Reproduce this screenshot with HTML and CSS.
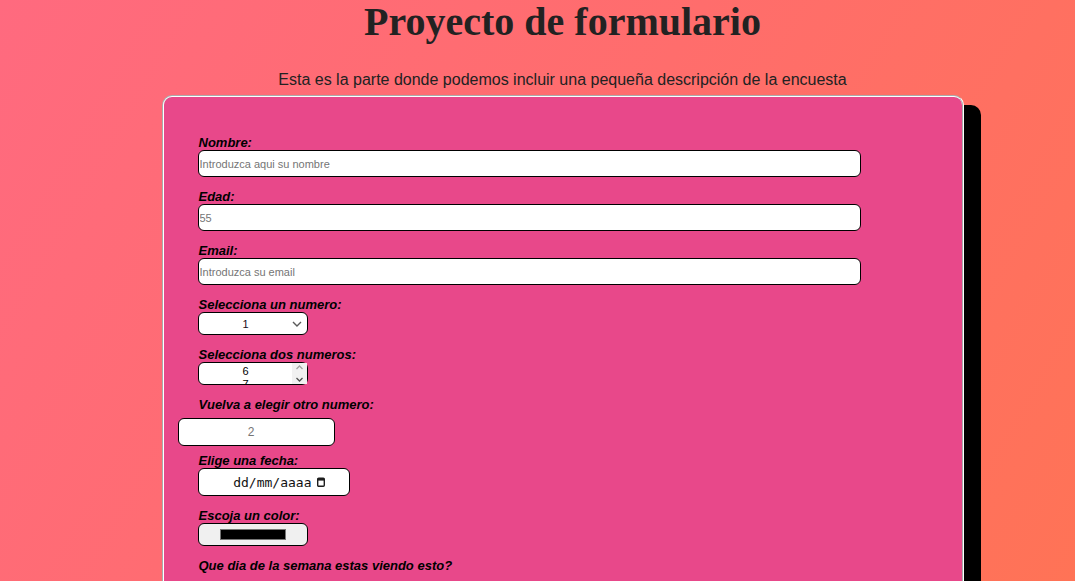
FILE: index.html
```html
<!DOCTYPE html>
<html lang="es">
<head>
<meta charset="utf-8">
<title>Proyecto de formulario</title>
<link rel="stylesheet" href="styles.css">
</head>
<body>
<div class="page">
  <h1 class="title">Proyecto de formulario</h1>
  <p class="desc">Esta es la parte donde podemos incluir una pequeña descripción de la encuesta</p>
  <form class="card">
    <div class="field">
      <label class="lbl" for="nombre">Nombre:</label>
      <input class="txt" id="nombre" type="text" placeholder="Introduzca aqui su nombre">
    </div>
    <div class="field">
      <label class="lbl" for="edad">Edad:</label>
      <input class="txt" id="edad" type="text" placeholder="55">
    </div>
    <div class="field">
      <label class="lbl" for="email">Email:</label>
      <input class="txt" id="email" type="email" placeholder="Introduzca su email">
    </div>
    <div class="field">
      <label class="lbl" for="num1">Selecciona un numero:</label>
      <span class="sel-wrap">
        <select class="sel" id="num1">
          <option>1</option><option>2</option><option>3</option><option>4</option><option>5</option>
        </select>
        <svg class="chev" width="10" height="6" viewBox="0 0 10 6"><polyline points="1,1 5,5 9,1" fill="none" stroke="#5a5a5a" stroke-width="1.4"/></svg>
      </span>
    </div>
    <div class="field">
      <label class="lbl" for="num2">Selecciona dos numeros:</label>
      <span class="multi-wrap">
        <select class="multi" id="num2" multiple>
          <option>6</option><option>7</option><option>8</option><option>9</option><option>10</option>
        </select>
        <svg class="sbar" width="15" height="21" viewBox="0 0 15 21"><rect width="15" height="21" fill="#f1f1f1"/><polyline points="4.5,6 7.5,3 10.5,6" fill="none" stroke="#a3a3a3" stroke-width="1.3"/><polyline points="4.5,15 7.5,18 10.5,15" fill="none" stroke="#505050" stroke-width="1.3"/></svg>
      </span>
    </div>
    <div class="field field-tight">
      <label class="lbl" for="num3">Vuelva a elegir otro numero:</label>
      <input class="num" id="num3" type="number" placeholder="2">
    </div>
    <div class="field">
      <label class="lbl" for="fecha">Elige una fecha:</label>
      <div class="date" id="fecha"><span class="date-val">dd/mm/aaaa</span><svg class="cal" width="8" height="10" viewBox="0 0 8 10"><rect x="0.7" y="1.2" width="6.6" height="8.1" rx="1" fill="none" stroke="#1e1e1e" stroke-width="1.4"/><rect x="0.7" y="1.2" width="6.6" height="2.4" fill="#1e1e1e"/></svg></div>
    </div>
    <div class="field">
      <label class="lbl" for="color">Escoja un color:</label>
      <input class="color" id="color" type="color" value="#000000">
    </div>
    <div class="field">
      <span class="lbl">Que dia de la semana estas viendo esto?</span>
    </div>
  </form>
</div>
</body>
</html>
```
FILE: styles.css
```css
html, body {
  margin: 0;
}
body {
  background: linear-gradient(120deg, #ff6a7f 0%, #ff6d6c 50%, #ff7356 100%);
  font-family: "Liberation Sans", Arial, sans-serif;
  color: #222;
  overflow: hidden;
  height: 581px;
}
.page {
  padding-left: 50px;
}
.title {
  margin: 0;
  font-family: "Liberation Serif", "Times New Roman", serif;
  font-size: 40px;
  font-weight: bold;
  text-align: center;
  color: #222;
  line-height: 44px;
}
.desc {
  margin: 27px 0 0;
  font-size: 16px;
  line-height: 18px;
  text-align: center;
  color: #222;
}
.card {
  width: 730px;
  margin: 6px auto 0;
  padding: 37px 34px 80px;
  background: #e8488a;
  border: 2px groove #ffffff;
  border-radius: 10px;
  box-shadow: 17px 10px 0 #000;
}
.field {
  display: flex;
  flex-direction: column;
  align-items: flex-start;
  margin-bottom: 11px;
}
.field-tight {
  margin-bottom: 6px;
}
.lbl {
  display: block;
  font-size: 13px;
  line-height: 15px;
  font-weight: bold;
  font-style: italic;
  color: #000;
  margin: 1px 0 0 1px;
}
.txt {
  box-sizing: border-box;
  width: 663px;
  height: 27px;
  margin: 0;
  padding: 1px 1px;
  border: 1px solid #000;
  border-radius: 6px;
  background: #fff;
  font-family: "Liberation Sans", Arial, sans-serif;
  font-size: 11px;
  color: #222;
  outline: none;
}
.txt::placeholder, .num::placeholder {
  color: #757575;
}
.sel-wrap, .multi-wrap {
  position: relative;
  display: block;
  width: 110px;
  height: 23px;
}
.sel {
  -webkit-appearance: none;
  appearance: none;
  box-sizing: border-box;
  width: 110px;
  height: 23px;
  margin: 0;
  padding: 0 14px 0 0;
  border: 1px solid #000;
  border-radius: 6px;
  background: #fff;
  font-family: "Liberation Sans", Arial, sans-serif;
  font-size: 11px;
  color: #1a0a20;
  text-align: center;
  text-align-last: center;
}
.chev {
  position: absolute;
  right: 6px;
  top: 9px;
  pointer-events: none;
}
.multi {
  box-sizing: border-box;
  width: 110px;
  height: 23px;
  margin: 0;
  padding: 2px 0 0;
  border: 1px solid #000;
  border-radius: 6px;
  background: #fff;
  font-family: "Liberation Sans", Arial, sans-serif;
  font-size: 11px;
  color: #000;
  text-align: center;
  overflow: hidden;
}
.multi option {
  text-align: center;
  padding: 0 14px 0 0;
}
.sbar {
  position: absolute;
  right: 1px;
  top: 1px;
  pointer-events: none;
}
.num {
  box-sizing: border-box;
  width: 157px;
  height: 28px;
  margin: 6px 0 0 -20px;
  padding: 1px 12px 1px 2px;
  border: 1px solid #000;
  border-radius: 6px;
  background: #fff;
  font-family: "Liberation Sans", Arial, sans-serif;
  font-size: 12px;
  text-align: center;
  -moz-appearance: textfield;
}
.num::-webkit-inner-spin-button,
.num::-webkit-outer-spin-button {
  -webkit-appearance: none;
  margin: 0;
}
.date {
  box-sizing: border-box;
  width: 152px;
  height: 28px;
  border: 1px solid #000;
  border-radius: 6px;
  background: #fff;
  display: flex;
  align-items: center;
  justify-content: flex-end;
  padding-right: 24px;
  gap: 5px;
}
.date-val {
  font-family: "DejaVu Sans Mono", "Liberation Mono", monospace;
  font-size: 13px;
  color: #111;
}
.cal {
  display: block;
}
.color {
  box-sizing: border-box;
  width: 110px;
  height: 23px;
  margin: 0;
  padding: 5px 21px;
  border: 1px solid #000;
  border-radius: 6px;
  background: #f0f0f0;
  cursor: pointer;
}
.color::-webkit-color-swatch-wrapper {
  padding: 0;
}
.color::-webkit-color-swatch {
  border: 1px solid #777;
  border-radius: 0;
}
```
